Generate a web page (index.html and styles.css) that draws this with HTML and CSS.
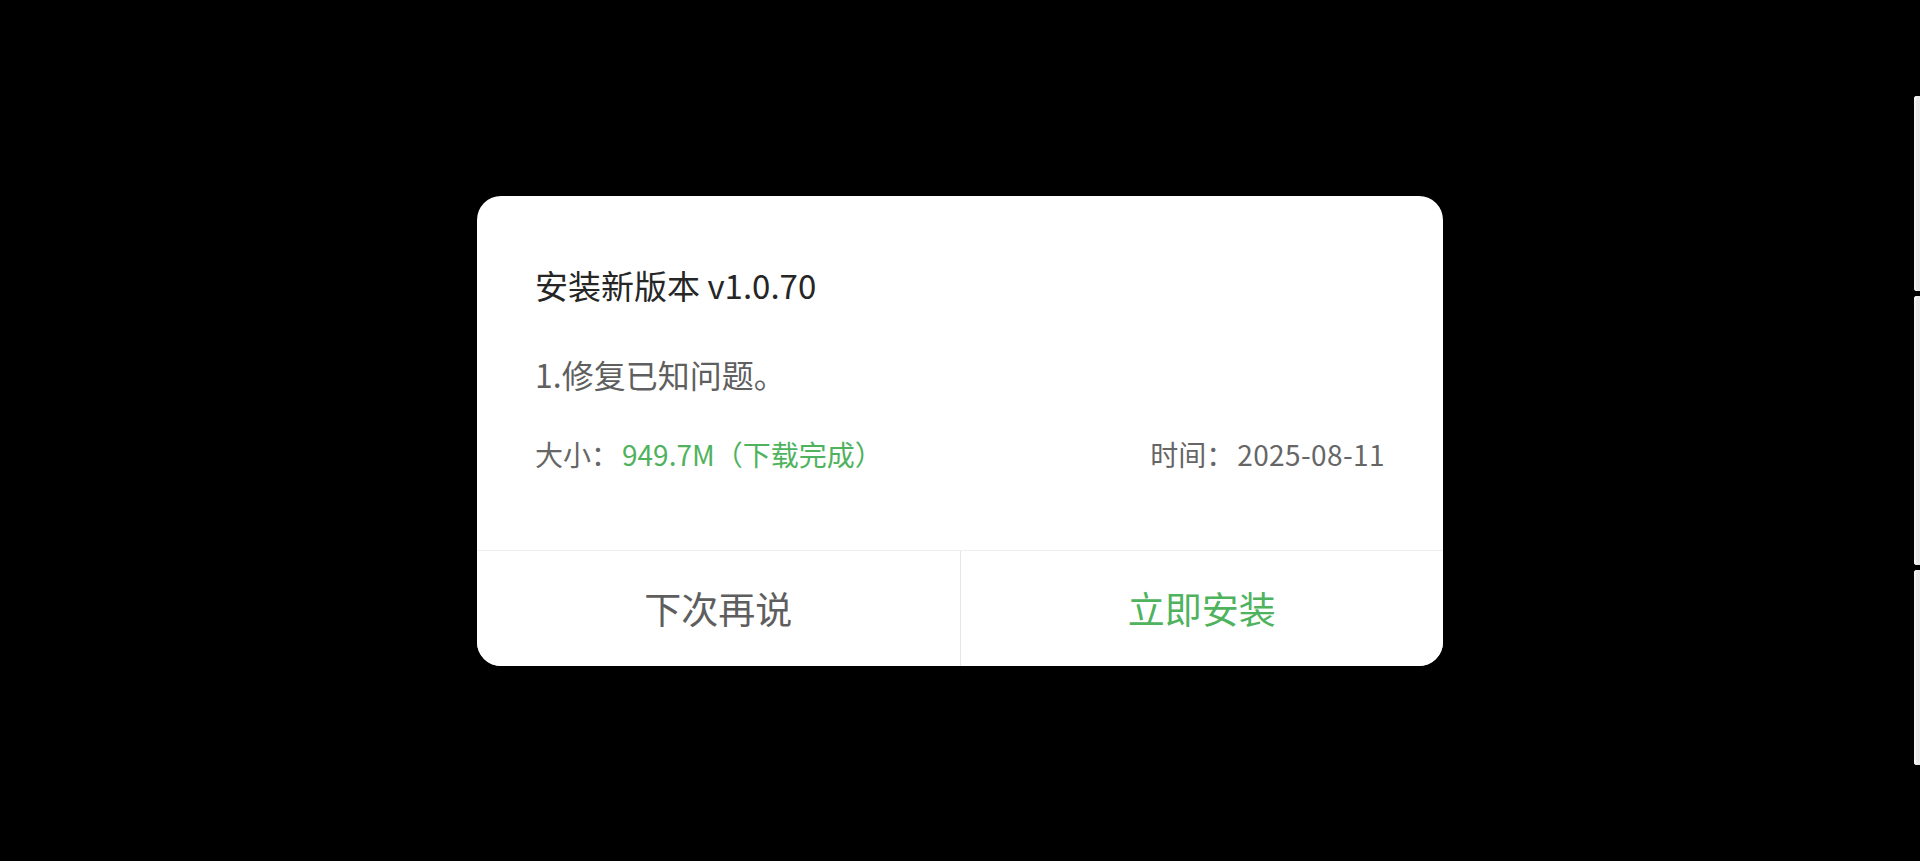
FILE: index.html
```html
<!doctype html>
<html>
<head>
    <meta charset="utf-8">
    <title>安装新版本</title>
    <link rel="stylesheet" href="styles.css">
</head>
<body>

<div class="dialog">
    <div class="content">
        <h1 class="title">安装新版本 v1.0.70</h1>
        <p class="notes">1.修复已知问题。</p>
        <div class="meta">
            <span>大小：<span class="ok">949.7M（下载完成）</span></span>
            <span>时间：<span class="num">2025-08-11</span></span>
        </div>
    </div>
    <div class="actions">
        <button class="btn later">下次再说</button>
        <button class="btn install">立即安装</button>
    </div>
</div>

<div class="scrollbar">
    <span class="seg seg1"></span>
    <span class="seg seg2"></span>
    <span class="seg seg3"></span>
</div>

</body>
</html>
```

FILE: styles.css
```css
html, body { margin: 0; height: 100%; }
body {
    background: #000;
    font-family: "Noto Sans CJK SC", "Noto Sans", sans-serif;
    display: flex;
    align-items: center;
    justify-content: center;
    overflow: hidden;
}

.dialog {
    width: 966px;
    background: #fff;
    border-radius: 24px;
    overflow: hidden;
}
.content { padding: 73px 58px 82px; }
.title {
    margin: 0;
    font-size: 33px; line-height: 33px;
    font-weight: 400;
    color: #262626;
}
.notes {
    margin: 56px 0 0;
    font-size: 32px; line-height: 32px;
    color: #5f5f5f;
}
.meta {
    margin-top: 50px;
    display: flex;
    justify-content: space-between;
    font-size: 28px; line-height: 28px;
    color: #666;
}
.ok { color: #4fb35e; padding-left: 3px; }
.num { padding-left: 3px; letter-spacing: 0.4px; }

.actions {
    display: flex;
    border-top: 1px solid #eeeeee;
}
.btn {
    flex: 1;
    height: 115px;
    border: 0;
    background: #fff;
    font-family: inherit;
    font-size: 37px;
    color: #5e5e5e;
    padding: 0;
}
.install {
    color: #4fb35e;
    border-left: 1px solid #e6e6e6;
}

/* edge strip on the right */
.scrollbar {
    position: absolute;
    right: 0; top: 96px;
    width: 6px;
    display: flex;
    flex-direction: column;
    gap: 5px;
}
.seg {
    display: block;
    background: #e9e9e9;
    border-radius: 3px 0 0 3px;
    box-shadow: inset 2px 0 0 #f7f7f7;
}
.seg1 { height: 195px; }
.seg2 { height: 269px; }
.seg3 { height: 195px; }
```
